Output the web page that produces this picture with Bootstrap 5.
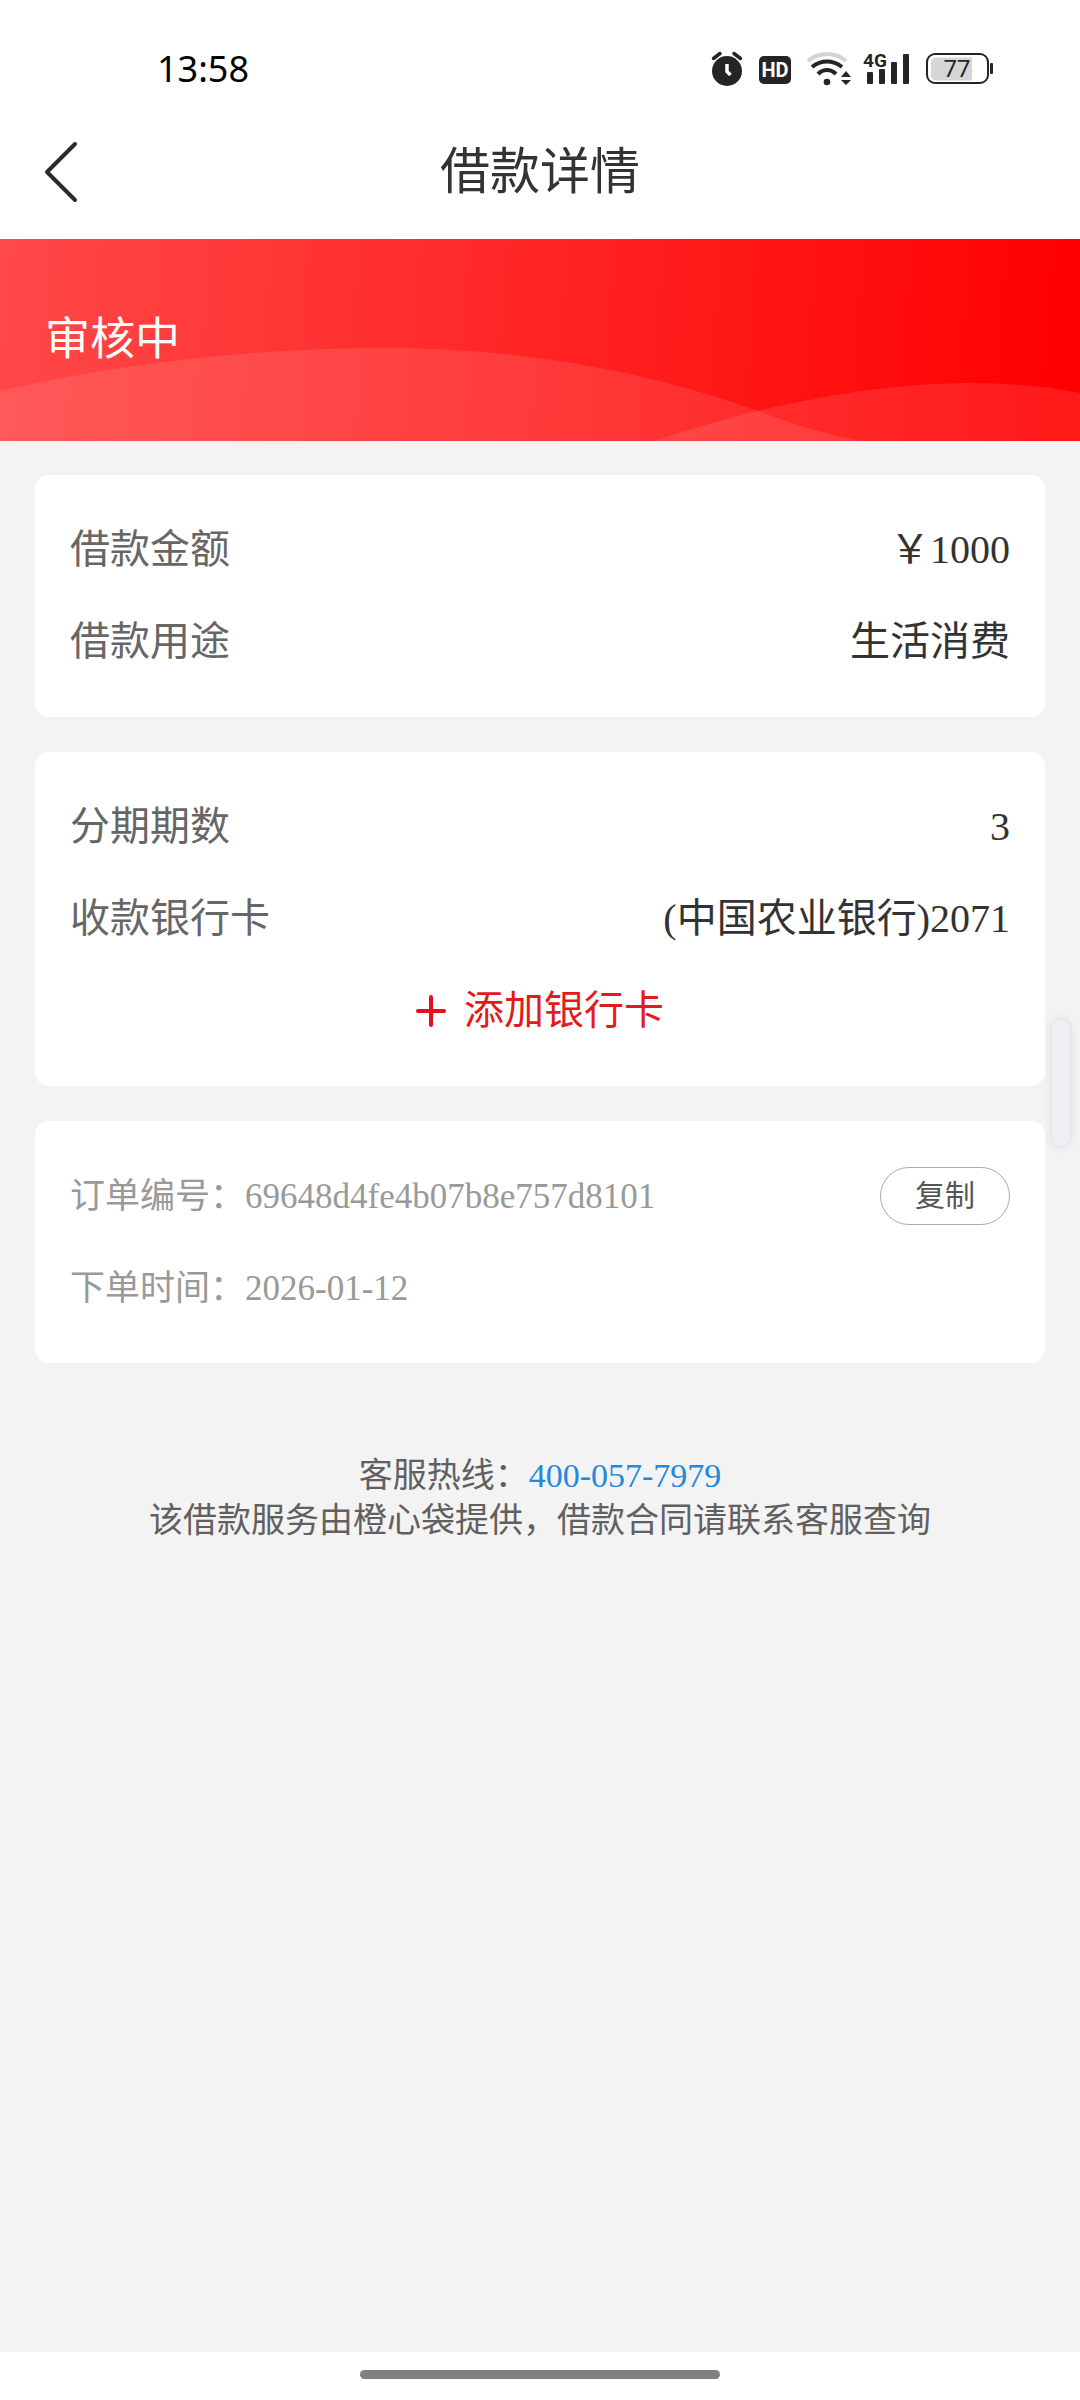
<!DOCTYPE html>
<html lang="zh-CN">
<head>
<meta charset="utf-8">
<meta name="viewport" content="width=device-width, initial-scale=1">
<title>借款详情</title>
<link rel="stylesheet" href="https://cdn.jsdelivr.net/npm/bootstrap@5.3.0/dist/css/bootstrap.min.css">
<style>
body{background:#f3f3f3;color:#333;font-family:"Liberation Serif","Noto Sans CJK SC",serif;font-size:40px;line-height:1}
svg{display:block;flex:none}
.status-bar{height:105px;padding:0 85px 16px 157px;align-items:flex-end}
.clock{font:36px/40px "Noto Sans",sans-serif;color:#000}
.topbar{height:134px;padding:0 40px}
.page-title{font-size:50px;line-height:60px}
.side{width:60px}
.banner{height:202px;padding:0 45px;background:linear-gradient(95deg,#ff4848,#ff2424 50%,#f00 98%)}
.banner h2{font-size:45px;line-height:60px}
.waves{inset:0;width:100%;height:100%}
.sheets{padding:34px 35px 0;gap:35px}
.sheet{border:0;border-radius:14px;padding:29px 35px}
.line{min-height:92px}
.caption-text{color:#666}
.add-btn{color:#e31b1b;font-size:40px;line-height:60px;gap:18px}
.order{color:#999;font-size:35px}
.copy-btn{width:130px;height:58px;border:1px solid #aaa;color:#555;font-size:30px;line-height:1}
.service{color:#606060;font-size:34px;line-height:45px;padding-top:90px}
.service a{color:#2488dc}
.drawer-handle{right:9px;top:1018px;width:20px;height:130px;background:#eeeff3;border:1px solid #e4e4e8;box-shadow:0 0 8px rgba(0,0,0,.08)}
.home-area{height:48px;padding-top:18px}
.home-pill{width:360px;height:9px;background:#808080}
</style>
</head>
<body>
<div class="position-relative d-flex flex-column min-vh-100">
  <div class="status-bar bg-white d-flex justify-content-between">
    <span class="clock">13:58</span>
    <div class="d-flex">
      <svg width="48" height="40" viewBox="0 0 48 40" role="img" aria-label="闹钟">
        <circle cx="16" cy="22" r="15" fill="#252525"/>
        <path d="M2.500 9.500L9 4.500M29.500 9.500L23 4.500" stroke="#252525" stroke-width="3.500" stroke-linecap="round"/>
        <path d="M16 15V22.500L19.500 26" fill="none" stroke="#fff" stroke-width="3.500"/>
      </svg>
      <svg width="42" height="40" viewBox="0 0 42 40" role="img" aria-label="HD">
        <rect y="7" width="32" height="28" rx="5" fill="#252525"/>
        <text x="16" y="28" text-anchor="middle" font-family="Roboto,sans-serif" font-weight="700" font-size="20" fill="#fff">HD</text>
      </svg>
      <svg width="58" height="40" viewBox="-4 0 58 40" role="img" aria-label="Wi-Fi">
        <g fill="none" stroke-width="4">
          <path d="M3 12Q11 5 22 5T41 12" stroke="#d3d3d3"/>
          <path d="M7 18Q14 12.500 22 12.500T37 18" stroke="#252525"/>
          <path d="M13 25Q17 21 22 21T31 25" stroke="#252525"/>
        </g>
        <circle cx="22" cy="33" r="3.300" fill="#252525"/>
        <path d="M41 22l5 6H36zM41 36l5-5H36z" fill="#252525"/>
      </svg>
      <svg width="66" height="40" viewBox="-6 0 66 40" role="img" aria-label="4G">
        <g fill="#252525"><rect x="2" y="23" width="6" height="12" rx="1"/><rect x="14" y="20" width="6" height="15" rx="1"/><rect x="26" y="13" width="6" height="22" rx="1"/><rect x="38" y="5" width="6" height="30" rx="1"/></g>
        <text x="-2" y="18" font-family="Roboto,sans-serif" font-weight="700" font-size="19" fill="#252525">4G</text>
      </svg>
      <svg width="70" height="40" viewBox="0 0 70 40" role="img" aria-label="电量 77%">
        <rect x="2" y="5" width="61" height="29" rx="8" fill="none" stroke="#252525" stroke-width="2"/>
        <path d="M11 8.500H47V31.500H11a5 5 0 0 1-5-5V13.500a5 5 0 0 1 5-5z" fill="#d6d6d6"/>
        <rect x="65" y="14" width="3" height="11" rx="1" fill="#252525"/>
        <text x="32" y="28" text-anchor="middle" font-family="Roboto,sans-serif" font-size="24" fill="#252525">77</text>
      </svg>
    </div>
  </div>
  <header class="topbar bg-white d-flex align-items-center justify-content-between">
    <a class="side" href="#" aria-label="返回">
      <svg width="40" height="64" viewBox="0 0 40 64"><path d="M35 4L7 32L35 60" fill="none" stroke="#2b2b2b" stroke-width="4" stroke-linecap="round" stroke-linejoin="round"/></svg>
    </a>
    <h1 class="page-title m-0 fw-normal">借款详情</h1>
    <span class="side"></span>
  </header>
  <section class="banner position-relative d-flex align-items-center">
    <svg class="waves position-absolute" viewBox="0 0 1080 202" preserveAspectRatio="none" aria-hidden="true">
      <path d="M0 152C120 124 255 109 385 109C560 109 690 147 761 173Q810 192 861 202H0z" fill="#fff" fill-opacity=".1"/>
      <path d="M654 202C760 166 875 144 971 144Q1030 144 1080 154V202z" fill="#fff" fill-opacity=".1"/>
    </svg>
    <h2 class="position-relative text-white fw-normal m-0">审核中</h2>
  </section>
  <main class="sheets d-flex flex-column">
    <section class="card sheet">
      <div class="line d-flex align-items-center justify-content-between"><span class="caption-text">借款金额</span><span>￥1000</span></div>
      <div class="line d-flex align-items-center justify-content-between"><span class="caption-text">借款用途</span><span>生活消费</span></div>
    </section>
    <section class="card sheet">
      <div class="line d-flex align-items-center justify-content-between"><span class="caption-text">分期期数</span><span>3</span></div>
      <div class="line d-flex align-items-center justify-content-between"><span class="caption-text">收款银行卡</span><span>(中国农业银行)2071</span></div>
      <div class="line d-flex align-items-center justify-content-center">
        <button type="button" class="add-btn btn border-0 p-0 d-flex align-items-center">
          <svg width="30" height="32" viewBox="0 0 30 32" aria-hidden="true"><path d="M2 16H28M15 2V30" stroke="#e5101a" stroke-width="4" stroke-linecap="round"/></svg>添加银行卡
        </button>
      </div>
    </section>
    <section class="card sheet order">
      <div class="line d-flex align-items-center justify-content-between">
        <span>订单编号：69648d4fe4b07b8e757d8101</span>
        <button type="button" class="copy-btn btn rounded-pill p-0">复制</button>
      </div>
      <div class="line d-flex align-items-center"><span>下单时间：2026-01-12</span></div>
    </section>
  </main>
  <footer class="service text-center">
    <div>客服热线：<a class="text-decoration-none" href="tel:400-057-7979">400-057-7979</a></div>
    <div>该借款服务由橙心袋提供，借款合同请联系客服查询</div>
  </footer>
  <div class="home-area bg-white mt-auto"><div class="home-pill rounded-pill mx-auto"></div></div>
  <div class="drawer-handle position-absolute rounded-pill"></div>
</div>
<script src="https://cdn.jsdelivr.net/npm/bootstrap@5.3.0/dist/js/bootstrap.bundle.min.js"></script>
</body>
</html>
